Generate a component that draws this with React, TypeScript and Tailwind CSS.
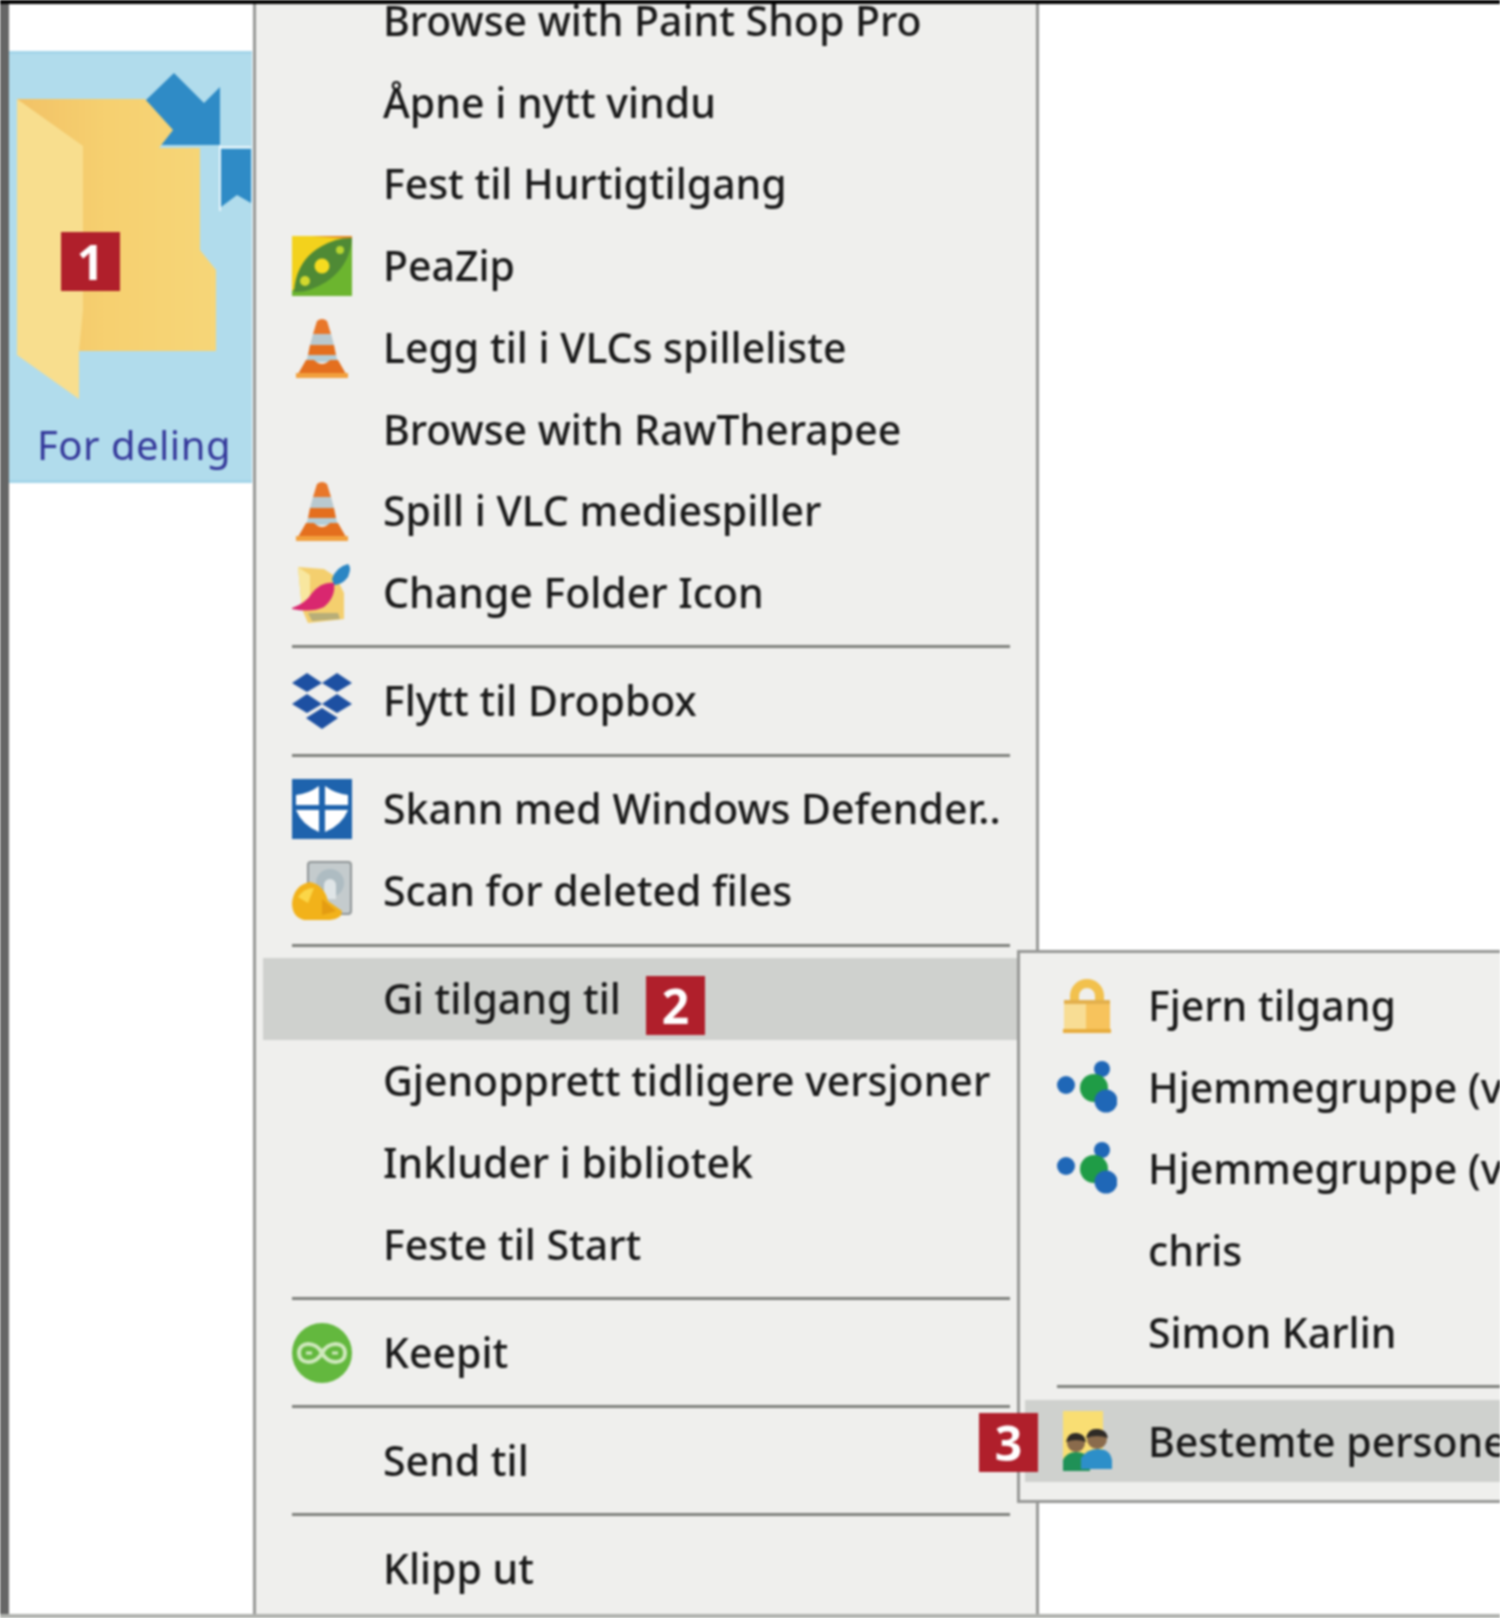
import React from 'react';

const Cone = () => (
  <svg viewBox="0 0 60 60" className="w-[60px] h-[60px]">
    <path d="M25 3 Q30 -1 35 3 L39 16 L21 16 Z" fill="#e8772a" />
    <path d="M21 16 L39 16 L42 27 L18 27 Z" fill="#b9c9cf" />
    <path d="M18 27 L42 27 L44 37 L16 37 Z" fill="#e46f1e" />
    <path d="M16 37 L44 37 L46 44 L14 44 Z" fill="#b4cdd6" />
    <path d="M14 42 L22 42 Q30 50 38 42 L46 42 L54 56 L6 56 Z" fill="#e46f1e" />
    <rect x="4" y="55" width="52" height="5" fill="#f2a03d" />
  </svg>
);

const PeaZip = () => (
  <svg viewBox="0 0 60 60" className="w-[60px] h-[60px]">
    <rect width="60" height="60" fill="#6cb52f" />
    <path d="M0 0 H60 L0 55 Z" fill="#f3d21c" />
    <path d="M20 0 H60 V3 Z" fill="#e58a1f" />
    <path d="M2 56 Q4 24 30 10 Q46 1 60 2 Q58 30 34 46 Q16 57 2 56 Z" fill="#4f8a35" />
    <circle cx="30" cy="30" r="7.5" fill="#f5dc20" />
    <circle cx="48" cy="14" r="4" fill="#b9d530" />
    <circle cx="13" cy="45" r="5" fill="#d3d82e" />
  </svg>
);

const ChangeIcon = () => (
  <svg viewBox="0 0 60 60" className="w-[60px] h-[60px]">
    <path d="M6 4 L32 6 L44 14 L52 30 V56 L16 60 L10 46 Z" fill="#f4cf6e" />
    <path d="M6 4 L18 12 V40 L10 46 Z" fill="#f8e79f" />
    <path d="M40 16 Q44 4 56 1 Q60 4 56 14 Q50 22 42 22 Z" fill="#2a86c4" />
    <path d="M0 45 Q14 40 20 30 Q30 18 42 20 Q44 34 32 44 Q20 50 0 46 Z" fill="#d9276f" />
    <path d="M16 50 L46 50 L48 56 L20 58 Z" fill="#b8ae78" />
  </svg>
);

const Dropbox = () => (
  <svg viewBox="0 0 60 60" className="w-[60px] h-[60px]" fill="#1d50a2">
    <path d="M15 2 L30 12 L15 21 L0 12 Z" />
    <path d="M45 2 L60 12 L45 21 L30 12 Z" />
    <path d="M15 23 L30 33 L15 42 L0 33 Z" />
    <path d="M45 23 L60 33 L45 42 L30 33 Z" />
    <path d="M30 37 L46 47 L30 58 L14 47 Z" />
  </svg>
);

const Shield = () => (
  <svg viewBox="0 0 60 60" className="w-[60px] h-[60px]">
    <rect width="60" height="60" fill="#1e63ad" />
    <path d="M27 7 V26 H4 V16 Q16 15 27 7 Z" fill="#fff" />
    <path d="M33 7 V26 H56 V16 Q44 15 33 7 Z" fill="#fff" />
    <path d="M4 31 H27 V53 Q10 46 4 31 Z" fill="#fff" />
    <path d="M56 31 H33 V53 Q50 46 56 31 Z" fill="#fff" />
  </svg>
);

const DiskScan = () => (
  <svg viewBox="0 0 60 60" className="w-[60px] h-[60px]">
    <rect x="16" y="1" width="43" height="52" rx="3" fill="#c4cbcd" stroke="#8f9596" strokeWidth="2" />
    <circle cx="38" cy="22" r="14" fill="#aebcc2" />
    <path d="M32 24 a6 6 0 0 1 12 0 v14 h-12 Z" fill="#dfe5e7" />
    <path d="M0 42 Q2 24 18 21 Q32 24 36 40 L50 50 Q50 58 38 59 L12 59 Q0 56 0 42 Z" fill="#f2b21a" />
    <path d="M6 36 Q12 27 22 27 L16 42 Z" fill="#fbd648" />
    <path d="M30 38 L44 50 L30 54 Z" fill="#e49c12" />
  </svg>
);

const Keepit = () => (
  <svg viewBox="0 0 60 60" className="w-[60px] h-[60px]">
    <circle cx="30" cy="30" r="30" fill="#63b83e" />
    <path d="M30 30 C24 18 7 18 7 30 C7 42 24 42 30 30 C36 18 53 18 53 30 C53 42 36 42 30 30 Z" fill="none" stroke="#cfe8bd" strokeWidth="4" />
    <path d="M20 30 H14 M40 30 H46" stroke="#cfe8bd" strokeWidth="3" />
  </svg>
);

const Lock = () => (
  <svg viewBox="0 0 60 60" className="w-[60px] h-[60px]">
    <path d="M13 24 V20 A17 17 0 0 1 47 20 V24 H38 V20 A8 8 0 0 0 22 20 V24 Z" fill="#f2c14d" />
    <rect x="7" y="24" width="46" height="30" fill="#f8dd94" />
    <rect x="29" y="27" width="24" height="27" fill="#f7c35c" />
    <rect x="7" y="24" width="46" height="4" fill="#e3b04d" />
    <rect x="6" y="53" width="48" height="4" fill="#e8ad3d" />
  </svg>
);

const Homegroup = () => (
  <svg viewBox="0 0 60 60" className="w-[60px] h-[60px]">
    <circle cx="9" cy="27" r="9" fill="#1f67b7" />
    <circle cx="45" cy="11" r="8" fill="#1f67b7" />
    <circle cx="37" cy="30" r="14" fill="#1f9c46" />
    <circle cx="49" cy="43" r="11.5" fill="#1f67b7" />
  </svg>
);

const People = () => (
  <svg viewBox="0 0 60 60" className="w-[60px] h-[60px]">
    <rect x="6" y="0" width="40" height="58" fill="#f9de73" />
    <circle cx="19" cy="32" r="9" fill="#8a6b4c" />
    <path d="M9 31 Q11 21 20 22 Q28 23 29 31 Q19 27 9 31 Z" fill="#2e2a26" />
    <path d="M6 60 V49 Q10 41 19 41 Q29 41 33 49 V60 Z" fill="#1f9157" />
    <circle cx="40" cy="28" r="10" fill="#8a6b4c" />
    <path d="M29 27 Q31 17 41 18 Q50 19 51 27 Q40 23 29 27 Z" fill="#2e2a26" />
    <path d="M24 58 V47 Q30 38 41 38 Q53 38 55 49 V58 Z" fill="#2d8fc9" />
  </svg>
);

const FolderTile = () => (
  <svg viewBox="0 3 242 350" className="w-[242px] h-[350px] shrink-0">
    <defs>
      <linearGradient id="folderBack" x1="0" y1="0" x2="1" y2="0">
        <stop offset="0" stopColor="#f2c266" />
        <stop offset="0.45" stopColor="#f6d070" />
        <stop offset="1" stopColor="#f6d678" />
      </linearGradient>
    </defs>
    <path d="M136 50 L165 22 L195 52 L211 36 V94 H150 L163 79 Z" fill="#2f8bc6" />
    <path d="M212 98 H242 V152 L228 144 L212 156 Z" fill="#2f8bc6" />
    <path d="M210 96 H242 M211 94 V160" stroke="#e6f4fa" strokeWidth="2" fill="none" />
    <path d="M8 48 H136 L164 79 L150 97 H191 V199 L207 219 V300 H70 V260 Z" fill="url(#folderBack)" />
    <path d="M8 48 L74 95 V259 L70 300 V348 L8 304 Z" fill="#f8de8e" />
  </svg>
);

type Item = { label?: string; icon?: React.ReactNode; active?: boolean; sep?: boolean };

const mainItems: Item[] = [
  { label: 'Browse with Paint Shop Pro' },
  { label: 'Åpne i nytt vindu' },
  { label: 'Fest til Hurtigtilgang' },
  { label: 'PeaZip', icon: <PeaZip /> },
  { label: 'Legg til i VLCs spilleliste', icon: <Cone /> },
  { label: 'Browse with RawTherapee' },
  { label: 'Spill i VLC mediespiller', icon: <Cone /> },
  { label: 'Change Folder Icon', icon: <ChangeIcon /> },
  { sep: true },
  { label: 'Flytt til Dropbox', icon: <Dropbox /> },
  { sep: true },
  { label: 'Skann med Windows Defender..', icon: <Shield /> },
  { label: 'Scan for deleted files', icon: <DiskScan /> },
  { sep: true },
  { label: 'Gi tilgang til', active: true },
  { label: 'Gjenopprett tidligere versjoner' },
  { label: 'Inkluder i bibliotek' },
  { label: 'Feste til Start' },
  { sep: true },
  { label: 'Keepit', icon: <Keepit /> },
  { sep: true },
  { label: 'Send til' },
  { sep: true },
  { label: 'Klipp ut' },
];

const subItems: Item[] = [
  { label: 'Fjern tilgang', icon: <Lock /> },
  { label: 'Hjemmegruppe (vis)', icon: <Homegroup /> },
  { label: 'Hjemmegruppe (vis og rediger)', icon: <Homegroup /> },
  { label: 'chris' },
  { label: 'Simon Karlin' },
  { sep: true },
  { label: 'Bestemte personer...', icon: <People />, active: true },
];

const Badge = ({ n, className }: { n: number; className: string }) => (
  <div className={`absolute w-[59px] h-[59px] bg-[#b01f2b] flex items-center justify-center text-white font-bold text-[48px] font-['Open_Sans',sans-serif] ${className}`}>
    {n}
  </div>
);

export default function App() {
  return (
    <div className="relative w-[1500px] h-[1618px] overflow-hidden bg-white flex font-['Noto_Sans',sans-serif] text-[41px] font-medium text-[#1a1a1a] blur-[0.8px]">
      <div className="absolute top-0 left-0 right-0 h-[4px] bg-black z-10" />
      <div className="absolute bottom-0 left-0 right-0 h-[4px] bg-[#b0b2ae] z-10" />

      {/* desktop with the folder */}
      <div className="w-[253px] shrink-0 border-l-[9px] border-[#666] pt-[51px]">
        <div className="w-[243px] h-[432px] bg-[#b1dcec] border-y-[3px] border-[#a4d5e9] flex flex-col">
          <FolderTile />
          <div className="pl-[28px] pt-[16px] text-[40px] leading-[50px] font-normal tracking-[0.5px] text-[#34389a] whitespace-nowrap">For deling</div>
        </div>
      </div>

      {/* context menu */}
      <div className="w-[786px] h-[1618px] shrink-0 bg-[#efefed] border-x-[3px] border-[#979896] overflow-hidden">
        <div className="-mt-[20px] ml-[7px] mr-[19px]">
          {mainItems.map((item, i) =>
            item.sep ? (
              <div key={i} className="h-[26.6px] flex items-center pl-[29px] pr-[7px]">
                <div className="h-[3px] w-full bg-[#7f817d]" />
              </div>
            ) : (
              <div key={i} className={`h-[81.7px] flex items-center pl-[29px] gap-[31px] whitespace-nowrap ${item.active ? 'bg-[#cfd1ce]' : ''}`}>
                <div className="w-[60px] h-[60px] shrink-0">{item.icon}</div>
                <span>{item.label}</span>
              </div>
            )
          )}
        </div>
      </div>

      {/* submenu */}
      <div className="absolute left-[1017px] top-[950px] w-[483px] h-[553px] bg-[#efefed] border-y-[3px] border-l-[3px] border-[#979896] pt-[12px] pl-[5px] overflow-hidden">
        {subItems.map((item, i) =>
          item.sep ? (
            <div key={i} className="h-[27px] flex items-center pl-[32px]">
              <div className="h-[3px] w-full bg-[#7f817d]" />
            </div>
          ) : (
            <div key={i} className={`h-[81.7px] flex items-center pl-[32px] gap-[31px] whitespace-nowrap ${item.active ? 'bg-[#cfd1ce]' : ''}`}>
              <div className="w-[60px] h-[60px] shrink-0">{item.icon}</div>
              <span>{item.label}</span>
            </div>
          )
        )}
      </div>

      <Badge n={1} className="left-[61px] top-[232px]" />
      <Badge n={2} className="left-[646px] top-[976px]" />
      <Badge n={3} className="left-[979px] top-[1413px]" />
    </div>
  );
}
